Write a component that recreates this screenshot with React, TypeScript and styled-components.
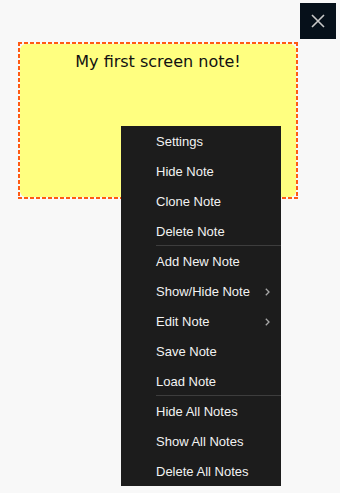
import React from 'react';
import styled, { createGlobalStyle } from 'styled-components';

const GlobalStyle = createGlobalStyle`
  html, body {
    margin: 0;
    padding: 0;
    background: #f8f8f8;
  }
  * { box-sizing: border-box; }
`;

const Page = styled.div`
  position: relative;
  width: 340px;
  height: 493px;
  padding: 42px 0 0 18px;
  overflow: hidden;
`;

const CloseButton = styled.button`
  position: absolute;
  top: 3px;
  right: 4px;
  width: 36px;
  height: 36px;
  border: none;
  padding: 0;
  background: #06101a;
  display: flex;
  align-items: center;
  justify-content: center;
  cursor: pointer;
`;

// dashed frame: 4px dash / 2px gap, drawn with gradients
const dash = '#ff5a14';
const NoteFrame = styled.div`
  width: 280px;
  height: 157px;
  padding: 2px;
  background:
    repeating-linear-gradient(90deg, ${dash} 0 4px, transparent 4px 6px) top left / 100% 2px no-repeat,
    repeating-linear-gradient(90deg, ${dash} 0 4px, transparent 4px 6px) bottom left / 100% 2px no-repeat,
    repeating-linear-gradient(180deg, ${dash} 0 4px, transparent 4px 6px) top left / 2px 100% no-repeat,
    repeating-linear-gradient(180deg, ${dash} 0 4px, transparent 4px 6px) top right / 2px 100% no-repeat;
`;

const Note = styled.div`
  height: 100%;
  background: #ffff80;
  border-radius: 6px;
  font-family: "DejaVu Sans", Verdana, sans-serif;
  font-size: 16px;
  color: #111;
  text-align: center;
  padding-top: 8px;
`;

const Menu = styled.ul`
  position: absolute;
  left: 121px;
  top: 126px;
  width: 160px;
  margin: 0;
  padding: 0;
  list-style: none;
  background: #1c1c1c;
  font-family: "Liberation Sans", Arial, sans-serif;
  font-size: 13px;
  color: #f2f2f2;
`;

const Item = styled.li<{ $divider?: boolean }>`
  position: relative;
  height: 30px;
  display: flex;
  align-items: center;
  padding-left: 35px;
  &::after {
    content: '';
    display: ${p => (p.$divider ? 'block' : 'none')};
    position: absolute;
    left: 35px;
    right: 0;
    bottom: 0;
    height: 1px;
    background: #3d3d3d;
  }
`;

const Chevron = styled.svg`
  position: absolute;
  right: 11px;
  top: 12px;
`;

const items: { label: string; divider?: boolean; sub?: boolean }[] = [
  { label: 'Settings' },
  { label: 'Hide Note' },
  { label: 'Clone Note' },
  { label: 'Delete Note', divider: true },
  { label: 'Add New Note' },
  { label: 'Show/Hide Note', sub: true },
  { label: 'Edit Note', sub: true },
  { label: 'Save Note' },
  { label: 'Load Note', divider: true },
  { label: 'Hide All Notes' },
  { label: 'Show All Notes' },
  { label: 'Delete All Notes' },
];

export default function App() {
  return (
    <Page>
      <GlobalStyle />
      <CloseButton aria-label="Close">
        <svg width="14" height="14" viewBox="0 0 14 14">
          <path d="M1 1L13 13M13 1L1 13" stroke="#c8c8c8" strokeWidth="1.6" />
        </svg>
      </CloseButton>
      <NoteFrame>
        <Note>My first screen note!</Note>
      </NoteFrame>
      <Menu>
        {items.map(it => (
          <Item key={it.label} $divider={it.divider}>
            {it.label}
            {it.sub && (
              <Chevron width="5" height="8" viewBox="0 0 5 8">
                <path d="M0.8 0.8L4 4L0.8 7.2" fill="none" stroke="#a8a8a8" strokeWidth="1.3" />
              </Chevron>
            )}
          </Item>
        ))}
      </Menu>
    </Page>
  );
}
